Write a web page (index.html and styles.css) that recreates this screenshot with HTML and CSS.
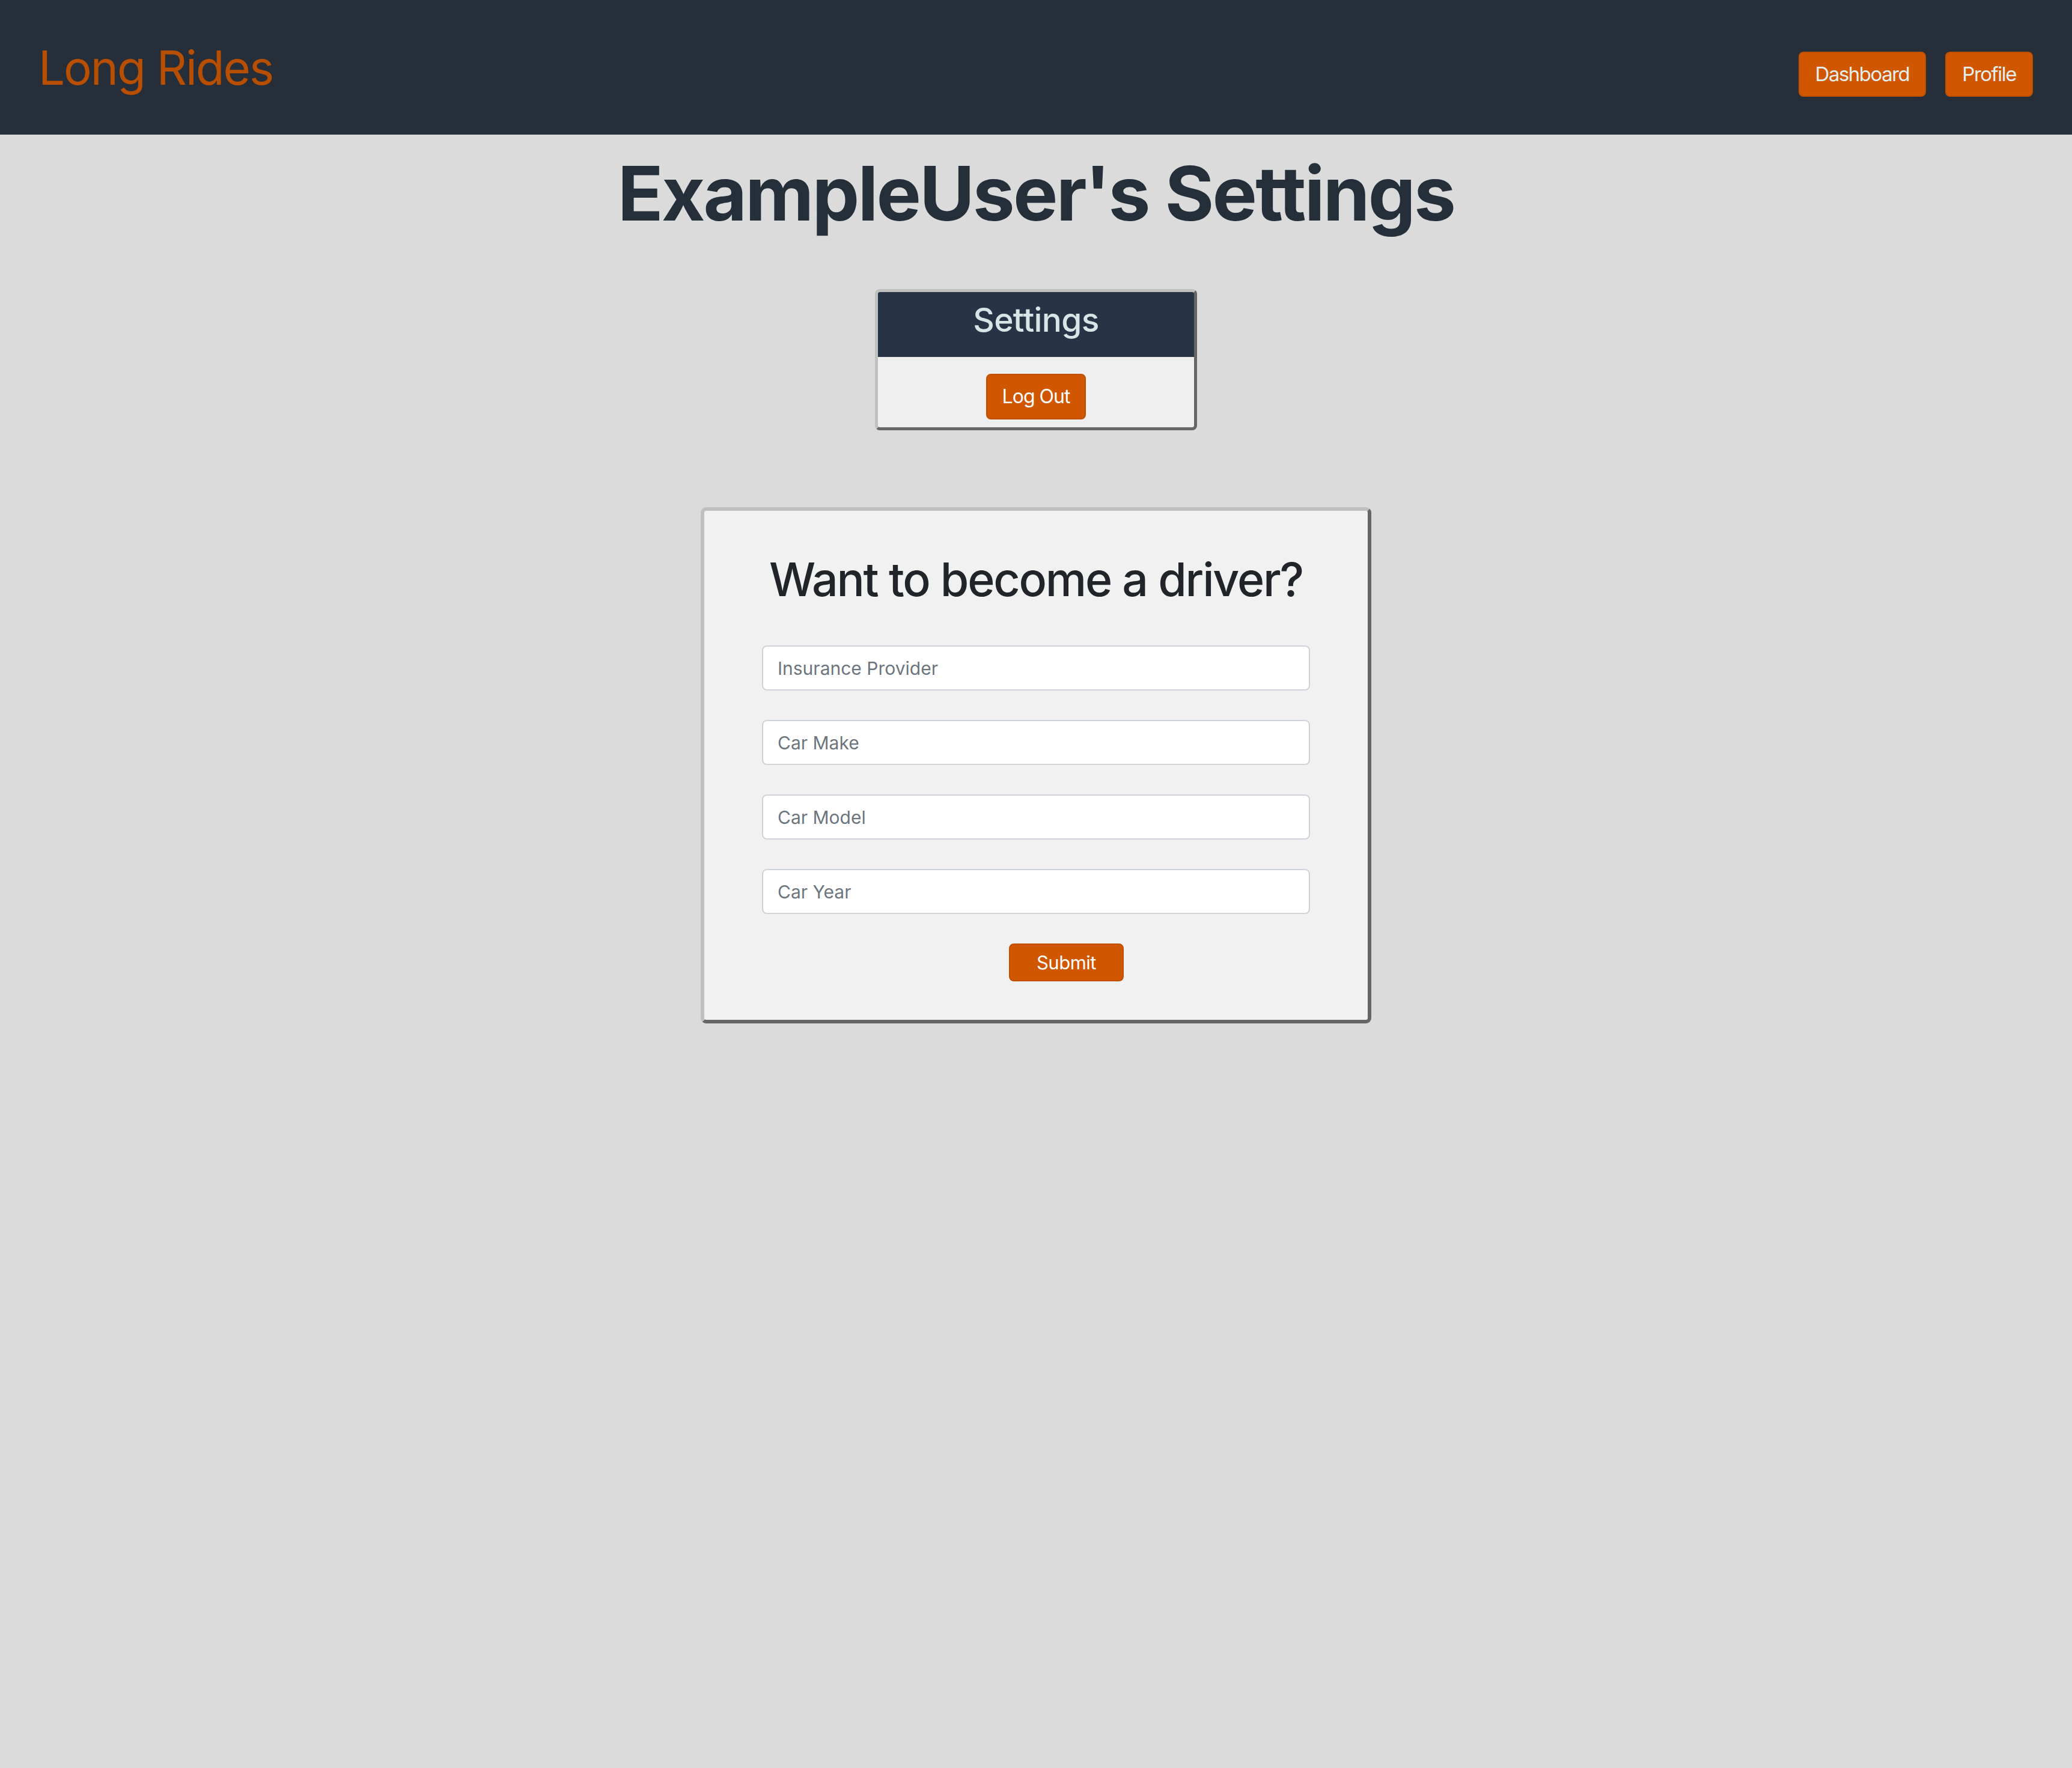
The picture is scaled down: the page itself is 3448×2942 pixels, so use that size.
FILE: index.html
```
<!DOCTYPE html>
<html lang="en">
<head>
<meta charset="utf-8">
<title>Long Rides - Settings</title>
<link rel="stylesheet" href="styles.css">
</head>
<body>
<nav class="navbar">
  <a class="brand" href="#">Long Rides</a>
  <div class="nav-links">
    <a class="btn btn-nav" href="#">Dashboard</a>
    <a class="btn btn-nav" href="#">Profile</a>
  </div>
</nav>
<main class="page">
  <h1 class="page-title">ExampleUser's Settings</h1>
  <section class="settings-card">
    <div class="settings-head">Settings</div>
    <div class="settings-body">
      <button class="btn btn-logout" type="button">Log Out</button>
    </div>
  </section>
  <section class="driver-card">
    <h2 class="driver-title">Want to become a driver?</h2>
    <form class="driver-form">
      <input class="field" type="text" placeholder="Insurance Provider">
      <input class="field" type="text" placeholder="Car Make">
      <input class="field" type="text" placeholder="Car Model">
      <input class="field" type="text" placeholder="Car Year">
      <div class="submit-row">
        <button class="btn btn-submit" type="button">Submit</button>
      </div>
    </form>
  </section>
</main>
</body>
</html>
```
FILE: styles.css
```
* { box-sizing: border-box; }
html, body {
  margin: 0;
  padding: 0;
  background: #dbdbdb;
  font-family: Inter, "Noto Sans", "Liberation Sans", sans-serif;
}
body { min-height: 2942px; }

.navbar {
  height: 224px;
  background: #262f39;
  display: flex;
  justify-content: space-between;
  align-items: flex-start;
  padding: 66px 65px 0 64px;
}
.brand {
  font-size: 78px;
  line-height: 94px;
  color: #b84f00;
  text-decoration: none;
  font-weight: 400;
  letter-spacing: -2px;
}
.nav-links {
  display: flex;
  gap: 32px;
  margin-top: 20px;
}
.btn {
  display: inline-block;
  background: #d05700;
  border: 2px solid #c05000;
  border-radius: 8px;
  text-decoration: none;
  font-family: Inter, "Noto Sans", sans-serif;
  cursor: pointer;
}
.btn-nav {
  font-size: 33px;
  line-height: 49px;
  padding: 11px 26px;
  color: #e2efee;
  letter-spacing: -1.5px;
}

.page {
  display: flex;
  flex-direction: column;
  align-items: center;
}
.page-title {
  margin: 23px 0 0;
  font-size: 125px;
  line-height: 150px;
  font-weight: 700;
  color: #252f39;
  letter-spacing: -2.8px;
  white-space: nowrap;
}

.settings-card {
  margin-top: 84px;
  width: 536px;
  border: 5px solid;
  border-color: #c0c0c0 #666666 #666666 #c0c0c0;
  border-radius: 8px;
  background: #efefef;
  overflow: hidden;
}
.settings-head {
  background: #283445;
  color: #d5e6e6;
  text-align: center;
  font-size: 55px;
  line-height: 66px;
  font-weight: 500;
  letter-spacing: -0.6px;
  padding: 13px 0 29px;
}
.settings-body {
  display: flex;
  justify-content: center;
  padding: 28px 0 13px;
}
.btn-logout {
  font-size: 32px;
  line-height: 48px;
  padding: 12px 25px;
  color: #ffffff;
  letter-spacing: -1px;
}

.driver-card {
  margin-top: 128px;
  width: 1116px;
  border: 6px solid;
  border-color: #c0c0c0 #666666 #666666 #c0c0c0;
  border-radius: 9px;
  background: #f1f1f1;
  padding: 68px 96px 64px;
}
.driver-title {
  margin: 0;
  text-align: center;
  font-size: 77px;
  line-height: 92px;
  font-weight: 500;
  color: #212529;
  letter-spacing: -2.2px;
  white-space: nowrap;
}
.driver-form {
  margin-top: 64px;
  display: flex;
  flex-direction: column;
  gap: 49px;
}
.field {
  width: 100%;
  height: 75px;
  border: 2px solid #ced4da;
  border-radius: 8px;
  background: #ffffff;
  padding: 0 24px;
  font-family: Inter, "Noto Sans", sans-serif;
  font-size: 30px;
  color: #495057;
}
.field::placeholder { color: #6c757d; }
.submit-row {
  display: flex;
  justify-content: center;
}
.btn-submit {
  margin-left: 101px;
  font-size: 31px;
  line-height: 47px;
  padding: 6px 44px;
  color: #ffffff;
  letter-spacing: -0.5px;
}
```
